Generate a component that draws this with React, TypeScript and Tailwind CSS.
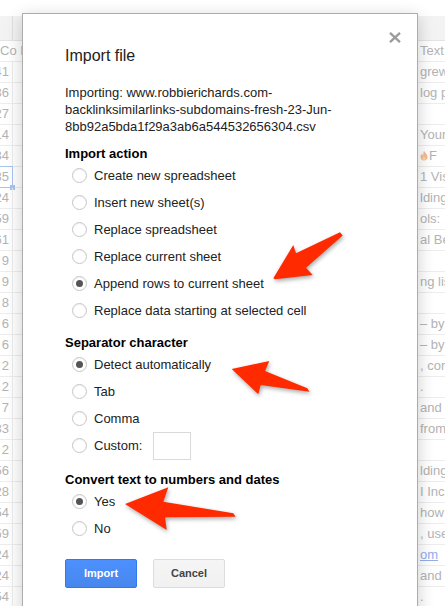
import type { ReactNode } from 'react';

const leftCells = ['41', '36', '27', '14', '34', '35', '24', '59', '61', '9', '9', '8', '6', '6', '2', '2', '7', '33', '2', '56', '28', '54', '59', '24', '24', '54'];

const rightCells = ['grew', 'log p', '', 'Your', 'FIRE', '1 Vis', 'LINKlding', 'ols: ', 'al Be', '', 'ng lis', '', '– by', '– by', ', cor', '.', 'and', 'from', '', 'lding', 'I Inc', 'how', ', use', 'LINKom', 'and', '.'];

function Flame() {
    return (
        <svg width="8" height="11" viewBox="0 0 8 11" className="mr-[1px] inline-block align-[-1px]">
            <path d="M4 0.5C4.6 2.6 7.5 4 7.5 7C7.5 9.2 6 10.5 4 10.5C2 10.5 0.5 9.2 0.5 7C0.5 5.3 1.6 4.3 2.3 3.6C2.3 5 2.8 5.6 3.3 5.8C3.3 3.8 3.3 2.2 4 0.5Z" fill="#f8b894" />
            <path d="M4 6C4.8 7 5.6 7.8 5.6 8.8C5.6 9.7 4.9 10.3 4 10.3C3.1 10.3 2.4 9.7 2.4 8.8C2.4 7.8 3.3 7 4 6Z" fill="#fbd9a0" />
        </svg>
    );
}

function RightCell({ text }: { text: string }) {
    if (text === 'FIRE') {
        return (
            <>
                <Flame />F
            </>
        );
    }
    if (text === 'LINKom') {
        return <span className="text-[#94aee9] underline">om</span>;
    }
    if (text === 'LINKlding') {
        return (
            <>
                <span className="text-[#94aee9]">l</span>ding
            </>
        );
    }
    return <>{text}</>;
}

function Radio({ label, checked = false, children }: { label: string; checked?: boolean; children?: ReactNode }) {
    return (
        <div className="flex h-[27px] items-center">
            <span className="ml-[7px] flex h-[15px] w-[15px] shrink-0 items-center justify-center rounded-full border border-[#c6c6c6] bg-white shadow-[inset_0_1px_1px_rgba(0,0,0,0.06)]">
                {checked && <span className="h-[7px] w-[7px] rounded-full bg-[#555]" />}
            </span>
            <span className="ml-[7px] text-[13px] leading-[16px] text-[#222]">{label}</span>
            {children}
        </div>
    );
}

function SectionTitle({ children, className = '' }: { children: ReactNode; className?: string }) {
    return <div className={`text-[13px] font-bold leading-[16px] text-black ${className}`}>{children}</div>;
}

export default function App() {
    return (
        <div className="relative h-[606px] w-[445px] overflow-hidden bg-white font-['Liberation_Sans',Arial,Helvetica,sans-serif]">
            {/* Faded spreadsheet behind the modal */}
            <div className="h-[16px]" />
            <div className="grid h-[25px] grid-cols-[13px_1fr_28px] border-b border-[#e4e4e4] bg-[#f3f3f3]">
                <div className="border-r border-[#e0e0e0]" />
                <div />
                <div />
            </div>

            <div className="grid h-[21px] grid-cols-[13px_1fr_28px] border-b border-[#ededed] text-[13px] leading-[20px] text-[#b3b3b3]">
                <div className="whitespace-nowrap">Co Bo</div>
                <div />
                <div className="overflow-hidden whitespace-nowrap pl-[3px]">Text</div>
            </div>

            {leftCells.map((num, i) => (
                <div
                    key={i}
                    className="grid h-[21px] grid-cols-[13px_1fr_28px] border-b border-[#ededed] text-[13px] leading-[20px] text-[#b3b3b3]"
                >
                    <div className="relative flex justify-end border-r border-[#ececec] pr-[3px]">
                        <div className="flex w-full justify-end overflow-hidden">
                            <span className="shrink-0">{num}</span>
                        </div>
                        {i === 5 && (
                            <>
                                <span className="absolute inset-[-1px] border border-[#a9c3f0]" />
                                <span className="absolute -bottom-[3px] -right-[3px] h-[5px] w-[5px] bg-[#a9c3f0]" />
                            </>
                        )}
                    </div>
                    <div />
                    <div className="overflow-hidden whitespace-nowrap pl-[3px]">
                        <RightCell text={rightCells[i]} />
                    </div>
                </div>
            ))}

            {/* Import dialog */}
            <div className="absolute left-[22px] top-[13px] -bottom-[40px] w-[396px] border border-[#acacac] bg-white pl-[42px] pt-[32px] shadow-[0_4px_16px_rgba(0,0,0,0.2)]">
                <button className="absolute right-[16px] top-[18px]" title="Close">
                    <svg width="12" height="11" viewBox="0 0 12 11">
                        <path d="M1 0.8L11 10.2M11 0.8L1 10.2" stroke="#9c9c9c" strokeWidth="2.3" />
                    </svg>
                </button>

                <div className="text-[16px] leading-[20px] text-[#222]">Import file</div>

                <div className="mt-[18px] text-[13px] leading-[17px] text-[#222]">
                    <div>Importing: www.robbierichards.com-</div>
                    <div>backlinksimilarlinks-subdomains-fresh-23-Jun-</div>
                    <div>8bb92a5bda1f29a3ab6a544532656304.csv</div>
                </div>

                <SectionTitle className="mt-[11px]">Import action</SectionTitle>
                <Radio label="Create new spreadsheet" />
                <Radio label="Insert new sheet(s)" />
                <Radio label="Replace spreadsheet" />
                <Radio label="Replace current sheet" />
                <Radio label="Append rows to current sheet" checked />
                <Radio label="Replace data starting at selected cell" />

                <SectionTitle className="mt-[11px]">Separator character</SectionTitle>
                <Radio label="Detect automatically" checked />
                <Radio label="Tab" />
                <Radio label="Comma" />
                <Radio label="Custom:">
                    <span className="ml-[11px] h-[28px] w-[38px] border border-[#d9d9d9] bg-white" />
                </Radio>

                <SectionTitle className="mt-[13px]">Convert text to numbers and dates</SectionTitle>
                <Radio label="Yes" checked />
                <Radio label="No" />

                <div className="mt-[17px] flex gap-[16px]">
                    <button className="h-[29px] w-[72px] rounded-[2px] border border-[#3079ed] bg-gradient-to-b from-[#4d90fe] to-[#4787ed] text-[11px] font-bold text-white">
                        Import
                    </button>
                    <button className="h-[29px] w-[72px] rounded-[2px] border border-[#dcdcdc] bg-gradient-to-b from-[#f5f5f5] to-[#f1f1f1] text-[11px] font-bold text-[#444]">
                        Cancel
                    </button>
                </div>
            </div>

            {/* Red annotation arrows */}
            <svg
                className="pointer-events-none absolute left-0 top-0 drop-shadow-[1px_2px_2px_rgba(0,0,0,0.35)]"
                width="445"
                height="606"
                viewBox="0 0 445 606"
            >
                <polygon
                    points="273.3,278.3 293.3,245 296,253.3 340,232.3 342.7,235.5 306,267.7 312.7,275 275,279.3"
                    fill="#ff2a00"
                />
                <polygon
                    points="231.7,369 269.3,361 265,371 307.3,388.3 309.5,391.7 260.7,385 258.3,394.3"
                    fill="#ff2a00"
                />
                <polygon
                    points="125,504 168.3,487.3 163.3,501.7 233.3,513.3 235.7,516.7 165,517.3 166.7,530"
                    fill="#ff2a00"
                />
            </svg>
        </div>
    );
}
